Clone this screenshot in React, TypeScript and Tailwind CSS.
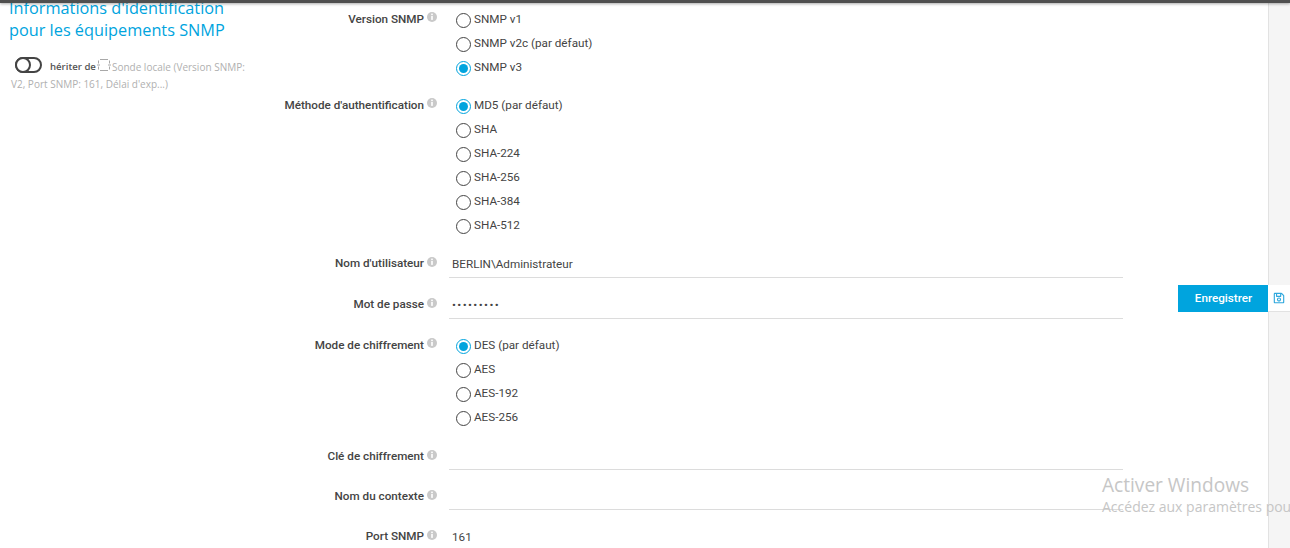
import React from "react";
import { FaRegSave } from "react-icons/fa";

const Info = ({ input }: { input?: boolean }) => (
  <svg
    width="10"
    height="10"
    viewBox="0 0 10 10"
    className={input ? "ml-[3px] mt-[-1px] shrink-0" : "ml-[3px] mt-[-3px] shrink-0"}
  >
    <circle cx="5" cy="5" r="5" fill="#c9c9c9" />
    <rect x="4.2" y="1.6" width="1.6" height="1.5" fill="#fff" />
    <rect x="4.2" y="3.9" width="1.6" height="4" fill="#fff" />
  </svg>
);

const Radio = ({ label, checked }: { label: string; checked?: boolean }) => (
  <div className="flex h-6 items-center">
    <span
      className={
        checked
          ? "mt-[2px] flex h-[15px] w-[15px] items-center justify-center rounded-full border-[1.5px] border-[#00a4de]"
          : "mt-[2px] flex h-[15px] w-[15px] items-center justify-center rounded-full border-[1.5px] border-[#444]"
      }
    >
      {checked && <span className="h-[9px] w-[9px] rounded-full bg-[#00a4de]" />}
    </span>
    <span className="ml-[3px] mt-[2px] text-[11.7px] leading-none text-[#444]">{label}</span>
  </div>
);

const Label = ({ text, input }: { text: string; input?: boolean }) => (
  <div className="flex w-[169px] shrink-0 items-center justify-end">
    <span className="mt-[2px] text-[11.7px] font-medium leading-none text-[#444]">{text}</span>
    <Info input={input} />
  </div>
);

const RadioRow = ({ label, items, className }: { label: string; items: [string, boolean?][]; className?: string }) => (
  <div className={"flex " + (className ?? "")}>
    <div className="flex h-6 items-center">
      <Label text={label} />
    </div>
    <div className="ml-[19px] flex flex-col">
      {items.map(([t, c]) => (
        <Radio key={t} label={t} checked={c} />
      ))}
    </div>
  </div>
);

const InputRow = ({
  label,
  value,
  className,
  mono,
  low,
}: {
  label: string;
  value?: string;
  className?: string;
  mono?: boolean;
  low?: boolean;
}) => (
  <div className={"flex h-[29px] " + (className ?? "")}>
    <div className={low ? "flex h-[30px] items-center" : "flex h-[28px] items-center"}>
      <Label text={label} input />
    </div>
    <div className="ml-[12px] flex h-[29px] w-[674px] items-center border-b border-[#dcdcdc] pl-[3px] pt-[3px] text-[11.7px] text-[#444]">
      <span className={mono ? "tracking-[1.4px] pl-[-1px]" : ""}>{value}</span>
    </div>
  </div>
);

export default function App() {
  return (
    <div className="relative h-[548px] w-[1290px] overflow-hidden bg-white font-['Roboto',sans-serif]">
      <div className="absolute left-0 right-0 top-0 z-10 h-[3px] bg-[#4f4f4f] shadow-[0_1px_3px_rgba(0,0,0,0.35)]" />
      <div className="flex h-full">
        <aside className="w-[268px] shrink-0 pl-[9px] font-['Open_Sans',sans-serif]">
          <h2 className="mt-[-4px] whitespace-nowrap pt-[1px] text-[16.3px] font-normal leading-[22px] text-[#00a4de]">
            Informations d'identification
            <br />
            pour les équipements SNMP
          </h2>
          <div className="mt-[15px] flex h-[17px] items-center pl-[6px]">
            <span className="relative block h-[16px] w-[27px] shrink-0 rounded-full border-2 border-[#444]">
              <span className="absolute left-[-2px] top-[-2px] block h-[16px] w-[16px] rounded-full border-2 border-[#444] bg-white" />
            </span>
            <span className="ml-[8px] mt-[5px] whitespace-nowrap text-[9.6px] font-semibold leading-none text-[#555]">hériter de</span>
            <svg width="14" height="14" viewBox="0 0 14 14" className="ml-[1px] shrink-0" fill="none" stroke="#a8a8a8">
              <path d="M3 1.5h8M3 12.5h8M1.5 2.5v3M1.5 8.5v3M12.5 2.5v3M12.5 8.5v3" />
              <path d="M0 7h3M11 7h3" />
            </svg>
            <span className="ml-[1px] mt-[5px] whitespace-nowrap text-[10px] leading-none text-[#b0b0b0]">Sonde locale (Version SNMP:</span>
          </div>
          <div className="mt-[3px] whitespace-nowrap pl-[2px] text-[10px] leading-[16px] text-[#b0b0b0]">V2, Port SNMP: 161, Délai d'exp...)</div>
        </aside>
        <main className="flex-1 pt-[7px]">
          <RadioRow label="Version SNMP" items={[["SNMP v1"], ["SNMP v2c (par défaut)"], ["SNMP v3", true]]} />
          <RadioRow
            className="mt-[14px]"
            label="Méthode d'authentification"
            items={[["MD5 (par défaut)", true], ["SHA"], ["SHA-224"], ["SHA-256"], ["SHA-384"], ["SHA-512"]]}
          />
          <InputRow className="mt-[12px]" label="Nom d'utilisateur" value="BERLIN\Administrateur" />
          <InputRow className="mt-[12px]" label="Mot de passe" value="•••••••••" mono />
          <RadioRow
            className="mt-[14px]"
            label="Mode de chiffrement"
            items={[["DES (par défaut)", true], ["AES"], ["AES-192"], ["AES-256"]]}
          />
          <InputRow className="mt-[12px]" label="Clé de chiffrement" low />
          <InputRow className="mt-[11px]" label="Nom du contexte" low />
          <InputRow className="mt-[12px] [&>div:last-child]:border-b-0" label="Port SNMP" value="161" />
        </main>
        <div className="w-[22px] shrink-0 border-l border-[#e2e2e2] bg-[#f5f5f5]" />
      </div>
      <div className="absolute left-[1178px] top-[285px] flex h-[27px]">
        <button className="flex h-[27px] w-[90px] items-center justify-center bg-[#00a4de] pl-[1px] pt-[1px] text-[11.7px] font-medium text-white">
          Enregistrer
        </button>
        <div className="flex h-[27px] w-[22px] items-center justify-center border-b border-[#e2e2e2] bg-white">
          <FaRegSave size={12} color="#2fa8dd" />
        </div>
      </div>
      <div className="absolute left-[1102px] top-[474px] whitespace-nowrap font-['Open_Sans',sans-serif] text-[#c6c6c6]">
        <div className="text-[19.1px] leading-[23px]">Activer Windows</div>
        <div className="mt-[1px] text-[14px] leading-[18px]">Accédez aux paramètres pour activer Windows.</div>
      </div>
    </div>
  );
}
